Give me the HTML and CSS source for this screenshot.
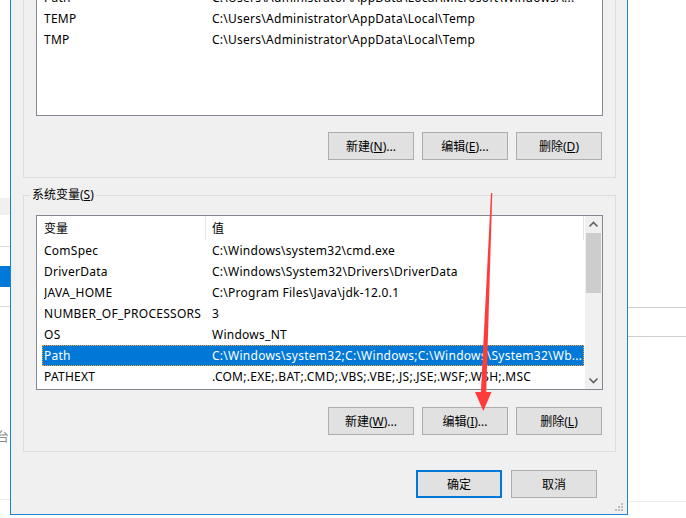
FILE: index.html
```html
<!DOCTYPE html>
<html lang="zh-CN">
<head>
<meta charset="utf-8">
<title>环境变量</title>
<link rel="stylesheet" href="styles.css">
</head>
<body>
<div class="screen">
  <div class="side side-left">
    <div class="gap g198"></div>
    <div class="band-grey"></div>
    <div class="gap g31"></div>
    <div class="hline"></div>
    <div class="gap g19"></div>
    <div class="band-blue"></div>
    <div class="gap g19"></div>
    <div class="hline"></div>
    <div class="gap g122"></div>
    <div class="ghost-text">台</div>
    <div class="gap g56"></div>
    <div class="hline faint"></div>
  </div>

  <div class="dialog">
    <fieldset class="group user">
      <legend>Administrator 的用户变量(<u>U</u>)</legend>
      <div class="listbox">
        <div class="list-main wide">
          <div class="lv-head"><span class="c1">变量</span><span class="c2">值</span></div>
          <div class="row"><span class="c1">OneDrive</span><span class="c2">C:\Users\Administrator\OneDrive</span></div>
          <div class="row"><span class="c1">Path</span><span class="c2">C:\Users\Administrator\AppData\Local\Microsoft\WindowsA...</span></div>
          <div class="row"><span class="c1">TEMP</span><span class="c2">C:\Users\Administrator\AppData\Local\Temp</span></div>
          <div class="row"><span class="c1">TMP</span><span class="c2">C:\Users\Administrator\AppData\Local\Temp</span></div>
        </div>
      </div>
      <div class="btn-row">
        <button class="btn">新建(<u>N</u>)...</button>
        <button class="btn">编辑(<u>E</u>)...</button>
        <button class="btn">删除(<u>D</u>)</button>
      </div>
    </fieldset>

    <fieldset class="group sys">
      <legend>系统变量(<u>S</u>)</legend>
      <div class="listbox">
        <div class="list-main">
          <div class="lv-head"><span class="c1">变量</span><span class="c2">值</span></div>
          <div class="row"><span class="c1">ComSpec</span><span class="c2">C:\Windows\system32\cmd.exe</span></div>
          <div class="row"><span class="c1">DriverData</span><span class="c2">C:\Windows\System32\Drivers\DriverData</span></div>
          <div class="row"><span class="c1">JAVA_HOME</span><span class="c2">C:\Program Files\Java\jdk-12.0.1</span></div>
          <div class="row"><span class="c1">NUMBER_OF_PROCESSORS</span><span class="c2">3</span></div>
          <div class="row"><span class="c1">OS</span><span class="c2">Windows_NT</span></div>
          <div class="row sel"><span class="c1">Path</span><span class="c2">C:\Windows\system32;C:\Windows;C:\Windows\System32\Wb...</span></div>
          <div class="row"><span class="c1">PATHEXT</span><span class="c2">.COM;.EXE;.BAT;.CMD;.VBS;.VBE;.JS;.JSE;.WSF;.WSH;.MSC</span></div>
        </div>
        <div class="vscroll">
          <div class="sb-btn">
            <svg width="17" height="17" viewBox="0 0 17 17"><polyline points="4.5,10.5 8.5,6.5 12.5,10.5" fill="none" stroke="#606060" stroke-width="1.6"/></svg>
          </div>
          <div class="sb-thumb"></div>
          <div class="sb-track"></div>
          <div class="sb-btn">
            <svg width="17" height="17" viewBox="0 0 17 17"><polyline points="4.5,6.5 8.5,10.5 12.5,6.5" fill="none" stroke="#606060" stroke-width="1.6"/></svg>
          </div>
        </div>
      </div>
      <div class="btn-row">
        <button class="btn">新建(<u>W</u>)...</button>
        <button class="btn">编辑(<u>I</u>)...</button>
        <button class="btn">删除(<u>L</u>)</button>
      </div>
    </fieldset>

    <div class="dlg-actions">
      <button class="btn default">确定</button>
      <button class="btn">取消</button>
    </div>

    <svg class="grip" width="10" height="9" viewBox="0 0 10 9">
      <rect x="6" y="0" width="2" height="2" fill="#bdbdbd"/>
      <rect x="3" y="3" width="2" height="2" fill="#bdbdbd"/>
      <rect x="6" y="3" width="2" height="2" fill="#bdbdbd"/>
      <rect x="0" y="6" width="2" height="2" fill="#bdbdbd"/>
      <rect x="3" y="6" width="2" height="2" fill="#bdbdbd"/>
      <rect x="6" y="6" width="2" height="2" fill="#bdbdbd"/>
    </svg>
  </div>

  <div class="side side-right">
    <div class="gap g307"></div>
    <div class="hline dark"></div>
    <div class="gap g28"></div>
    <div class="hline dark"></div>
    <div class="gap g164"></div>
    <div class="hline faint"></div>
  </div>
</div>

<svg class="annot" width="686" height="518" viewBox="0 0 686 518">
  <polygon points="491,193 492.3,193 486.2,394 480.8,394" fill="#ff3c3c"/>
  <polygon points="475,392 491.5,392 483.3,411" fill="#ff3c3c"/>
</svg>
</body>
</html>
```

FILE: styles.css
```css
html, body {
  margin: 0;
  padding: 0;
  background: #ffffff;
}

body {
  font-family: "Noto Sans", "Noto Sans CJK SC", sans-serif;
  font-size: 12px;
  color: #000;
  width: 686px;
  height: 518px;
  overflow: hidden;
  position: relative;
}

.screen {
  display: flex;
  height: 515px;
  overflow: hidden;
}

/* background window strips */
.side {
  display: flex;
  flex-direction: column;
  flex: none;
  background: #fff;
}
.side-left { width: 10px; }
.side-right { width: 58px; }

.gap { flex: none; }
.g19 { height: 19px; }
.g28 { height: 28px; }
.g31 { height: 31px; }
.g56 { height: 56px; }
.g122 { height: 122px; }
.g164 { height: 164px; }
.g198 { height: 198px; }
.g307 { height: 307px; }

.band-grey { height: 17px; background: #f0f0f0; flex: none; }
.band-blue { height: 21px; background: #0078d7; flex: none; }
.hline { height: 1px; background: #dadada; flex: none; }
.hline.dark { background: #cfcfcf; }
.hline.faint { background: #ececec; }

.ghost-text {
  height: 14px;
  line-height: 14px;
  font-size: 13px;
  color: #8c8c8c;
  margin-left: -4px;
  overflow: hidden;
  flex: none;
}

/* dialog */
.dialog {
  width: 618px;
  flex: none;
  box-sizing: border-box;
  border: 1px solid #1883d7;
  border-top: none;
  background: #f0f0f0;
  display: flex;
  flex-direction: column;
  justify-content: flex-end;
  overflow: hidden;
  padding: 0 11px 16px 12px;
  position: relative;
}

.group {
  margin: 0;
  border: 1px solid #dcdcdc;
  padding: 12px 12px 16px 12px;
  min-width: 0;
  flex: none;
}
.group.user { padding-bottom: 17px; }
.group.sys { margin-top: 9px; }
.group.sys .btn-row { margin-top: 17px; }

.group legend {
  padding: 0 2px;
  margin-left: -6px;
  line-height: 16px;
  height: 16px;
}

.listbox {
  border: 1px solid #828790;
  background: #fff;
  height: 175px;
  box-sizing: border-box;
  display: flex;
  overflow: hidden;
}

.list-main {
  flex: 1;
  min-width: 0;
  padding: 0 1px 0 5px;
}

.lv-head {
  display: grid;
  grid-template-columns: 164px 1fr;
  height: 24px;
  box-sizing: border-box;
  border-right: 1px solid #e5e5e5;
}
.list-main.wide .lv-head { border-right: none; }
.lv-head span {
  display: flex;
  align-items: center;
  padding-bottom: 1px;
}
.lv-head .c1 {
  padding-left: 2px;
  border-right: 1px solid #e5e5e5;
}
.lv-head .c2 { padding-left: 6px; }

.row {
  display: grid;
  grid-template-columns: 168px 1fr;
  height: 21px;
  align-items: center;
  padding-left: 2px;
  white-space: nowrap;
  box-sizing: border-box;
  letter-spacing: 0.26px;
}
.row span { overflow: hidden; }
.row.sel {
  background: #0078d7;
  color: #fff;
  outline: 1px dotted #f2a33a;
  outline-offset: -1px;
}

.vscroll {
  width: 17px;
  flex: none;
  background: #f0f0f0;
  display: flex;
  flex-direction: column;
}
.sb-btn { height: 17px; flex: none; }
.sb-btn svg { display: block; }
.sb-thumb {
  height: 60px;
  margin: 0 1px;
  background: #cdcdcd;
  flex: none;
}
.sb-track { flex: 1; }

/* buttons */
.btn-row {
  display: flex;
  justify-content: flex-end;
  gap: 8px;
  margin-top: 16px;
  padding-right: 1px;
}

.btn {
  width: 86px;
  height: 28px;
  box-sizing: border-box;
  border: 1px solid #adadad;
  background: #e1e1e1;
  font: inherit;
  color: #000;
  padding: 0;
  margin: 0;
  display: flex;
  align-items: center;
  justify-content: center;
  flex: none;
}
.btn.default { border: 2px solid #0078d7; }

.dlg-actions {
  display: flex;
  justify-content: flex-end;
  gap: 9px;
  margin-top: 18px;
  padding-right: 19px;
  flex: none;
}

.grip {
  position: absolute;
  right: 2px;
  bottom: 2px;
}

.annot {
  position: absolute;
  left: 0;
  top: 0;
  pointer-events: none;
}
```
